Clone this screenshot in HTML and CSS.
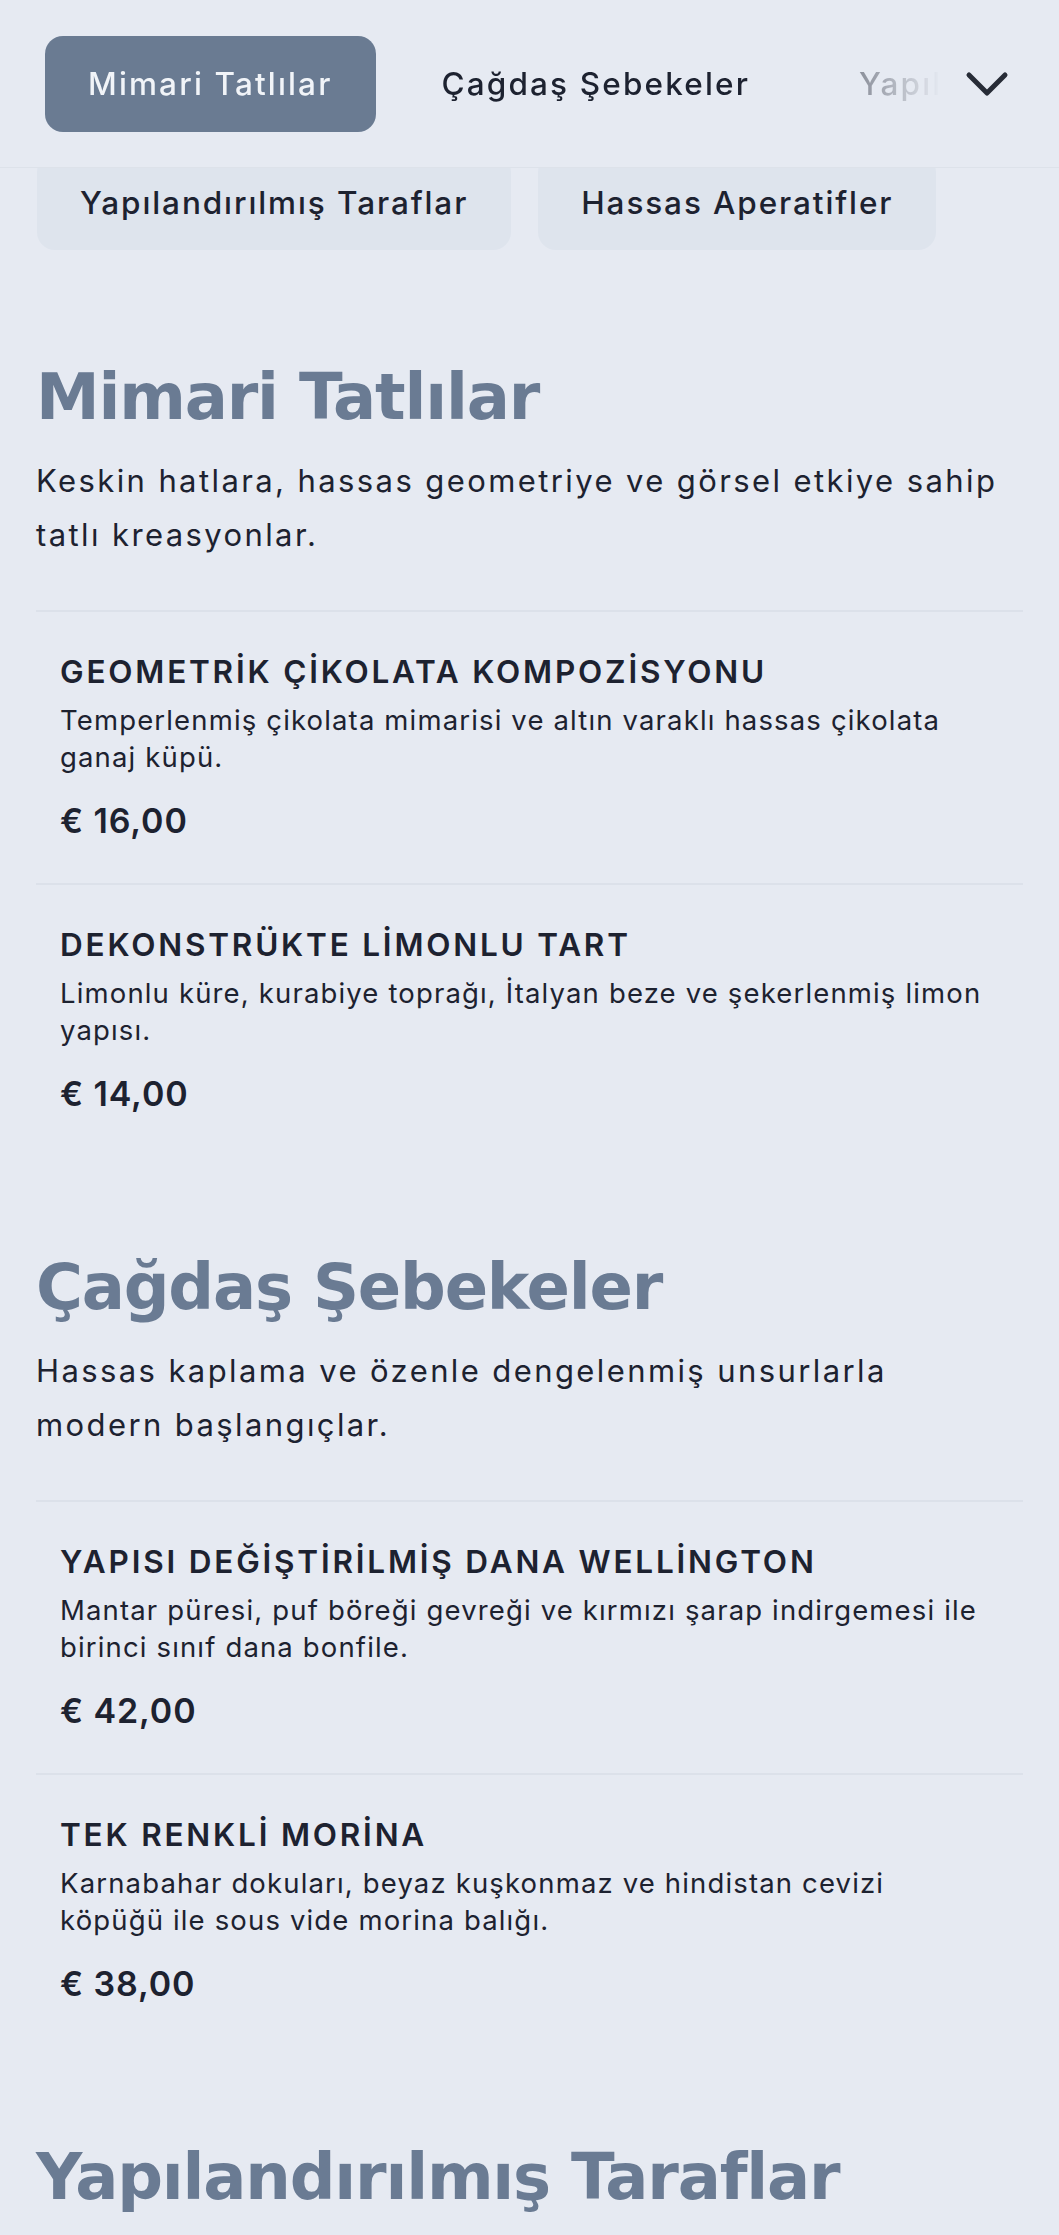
FILE: index.html
```html
<!DOCTYPE html>
<html lang="tr">
<head>
<meta charset="utf-8">
<title>Menü</title>
<link rel="stylesheet" href="styles.css">
</head>
<body>
<header class="topbar">
  <nav class="tabs">
    <a class="tab tab-active" href="#mimari">Mimari Tatlılar</a>
    <a class="tab" href="#cagdas">Çağdaş Şebekeler</a>
    <a class="tab" href="#yapilandirilmis">Yapılandırılmış Taraflar</a>
    <a class="tab" href="#hassas">Hassas Aperatifler</a>
  </nav>
  <button class="toggle" type="button" aria-label="Kategoriler">
    <svg class="toggle-icon" viewBox="0 0 44 26" width="44" height="26" aria-hidden="true">
      <polyline points="4,4 22,22 40,4" fill="none" stroke="currentColor" stroke-width="5" stroke-linecap="round" stroke-linejoin="round"/>
    </svg>
  </button>
</header>

<div class="chips">
  <a class="chip" href="#mimari">Mimari Tatlılar</a>
  <a class="chip" href="#cagdas">Çağdaş Şebekeler</a>
  <a class="chip" href="#yapilandirilmis">Yapılandırılmış Taraflar</a>
  <a class="chip" href="#hassas">Hassas Aperatifler</a>
</div>

<main class="menu">
  <section class="cat" id="mimari">
    <h2 class="cat-title">Mimari Tatlılar</h2>
    <p class="cat-desc">Keskin hatlara, hassas geometriye ve görsel etkiye sahip tatlı kreasyonlar.</p>
    <ul class="items">
      <li class="item">
        <h3 class="item-name">GEOMETRİK ÇİKOLATA KOMPOZİSYONU</h3>
        <p class="item-desc">Temperlenmiş çikolata mimarisi ve altın varaklı hassas çikolata ganaj küpü.</p>
        <span class="price">€ 16,00</span>
      </li>
      <li class="item">
        <h3 class="item-name">DEKONSTRÜKTE LİMONLU TART</h3>
        <p class="item-desc">Limonlu küre, kurabiye toprağı, İtalyan beze ve şekerlenmiş limon yapısı.</p>
        <span class="price">€ 14,00</span>
      </li>
    </ul>
  </section>

  <section class="cat" id="cagdas">
    <h2 class="cat-title">Çağdaş Şebekeler</h2>
    <p class="cat-desc">Hassas kaplama ve özenle dengelenmiş unsurlarla modern başlangıçlar.</p>
    <ul class="items">
      <li class="item">
        <h3 class="item-name">YAPISI DEĞİŞTİRİLMİŞ DANA WELLİNGTON</h3>
        <p class="item-desc">Mantar püresi, puf böreği gevreği ve kırmızı şarap indirgemesi ile birinci sınıf dana bonfile.</p>
        <span class="price">€ 42,00</span>
      </li>
      <li class="item">
        <h3 class="item-name">TEK RENKLİ MORİNA</h3>
        <p class="item-desc">Karnabahar dokuları, beyaz kuşkonmaz ve hindistan cevizi köpüğü ile sous vide morina balığı.</p>
        <span class="price">€ 38,00</span>
      </li>
    </ul>
  </section>

  <section class="cat" id="yapilandirilmis">
    <h2 class="cat-title">Yapılandırılmış Taraflar</h2>
    <p class="cat-desc">Geometrik kesimler ve dengeli dokularla hazırlanmış yan lezzetler.</p>
  </section>
</main>
</body>
</html>
```

FILE: styles.css
```css
* { box-sizing: border-box; }

html, body {
  margin: 0;
  padding: 0;
  background: #e6eaf2;
}

body {
  font-family: Inter, "Noto Sans", "Liberation Sans", sans-serif;
  color: #1d2230;
}

a { color: inherit; text-decoration: none; }

.topbar {
  position: sticky;
  top: 0;
  z-index: 5;
  display: flex;
  align-items: center;
  height: 168px;
  padding: 0 40px 0 45px;
  background: #e6eaf2;
  border-bottom: 1px solid #dde2ea;
}

.tabs {
  flex: 1;
  display: flex;
  gap: 23px;
  margin-right: 14px;
  overflow: hidden;
  -webkit-mask-image: linear-gradient(to right, #000 calc(100% - 100px), rgba(0,0,0,0.45) calc(100% - 82px), transparent 100%);
  mask-image: linear-gradient(to right, #000 calc(100% - 100px), rgba(0,0,0,0.45) calc(100% - 82px), transparent 100%);
}

.tab {
  flex: none;
  display: flex;
  align-items: center;
  height: 96px;
  padding: 0 43px;
  border-radius: 18px;
  font-size: 31.5px;
  font-weight: 500;
  letter-spacing: 2.15px;
  color: #1d2230;
  white-space: nowrap;
}

.tab-active {
  background: #6a7b92;
  color: #f1f4f8;
}

.toggle {
  flex: none;
  width: 64px;
  height: 64px;
  padding: 0;
  border: 0;
  background: transparent;
  color: #272c37;
  display: flex;
  align-items: center;
  justify-content: center;
}

.chips {
  display: flex;
  flex-wrap: wrap;
  gap: 27px;
  padding: 0 37px;
  margin-top: -137px;
}

.chip {
  display: flex;
  align-items: center;
  height: 96px;
  padding: 0 43px;
  border-radius: 18px;
  background: #dee4ed;
  font-size: 31.5px;
  font-weight: 500;
  letter-spacing: 1.9px;
  color: #1d2230;
  white-space: nowrap;
}

.menu {
  padding: 0 36px;
}

.cat {
  padding-top: 109px;
}

.cat + .cat {
  padding-top: 93px;
}

.cat-title {
  margin: 0;
  font-family: "DejaVu Sans", Inter, sans-serif;
  font-weight: 700;
  font-size: 64px;
  line-height: 77px;
  letter-spacing: -1.2px;
  color: #6a7b93;
}

.cat-desc {
  margin: 18px 0 0;
  font-size: 31px;
  line-height: 53.5px;
  letter-spacing: 2.4px;
  color: #1d2230;
  padding-right: 16px;
}

.items {
  list-style: none;
  margin: 49px 0 0;
  padding: 0;
}

.item {
  border-top: 2px solid #dce1ea;
  padding: 40px 36px 40px 24px;
}

.item-name {
  margin: 0;
  font-size: 31.5px;
  line-height: 40px;
  font-weight: 600;
  letter-spacing: 2.8px;
  color: #1d2230;
  white-space: nowrap;
}

.item-desc {
  margin: 10px 0 0;
  font-size: 27.5px;
  line-height: 37px;
  letter-spacing: 1.15px;
  color: #1d2230;
}

.price {
  display: block;
  margin-top: 23px;
  font-size: 34px;
  line-height: 44px;
  font-weight: 600;
  letter-spacing: 0.9px;
  color: #1d2230;
}
```
